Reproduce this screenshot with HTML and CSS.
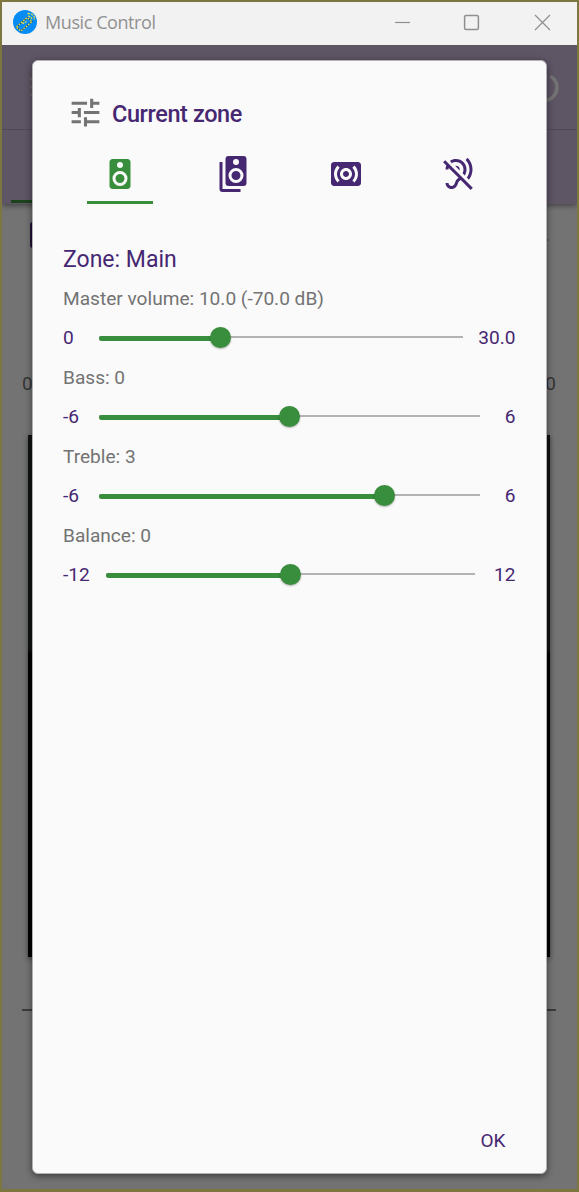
FILE: index.html
```html
<!DOCTYPE html>
<html lang="en">
<head>
<meta charset="utf-8">
<title>Music Control</title>
<link rel="stylesheet" href="styles.css">
</head>
<body>
<div class="window">
  <header class="titlebar">
    <svg class="app-icon" viewBox="0 0 24 24">
      <circle cx="12" cy="12" r="12" fill="#078cf5"/>
      <g fill="none">
        <path d="M3.500 17 14 7.500l5 4L8 21z" stroke="#1d4a68" stroke-width="1.300"/>
        <path d="M3.500 17 14 7.500l5 4L8 21z" stroke="#e4df45" stroke-width="1.300" stroke-dasharray="1.800 1.200"/>
        <path d="M9 12.500l1.500 1 3-2M14.500 3.500l4 .5 2.500 2 .5 4M15 6l3 1 1 2" stroke="#e4df45" stroke-width="1.300" stroke-dasharray="2.500 1"/>
      </g>
    </svg>
    <span class="app-name">Music Control</span>
    <svg class="caption" viewBox="0 0 160 20">
      <g fill="none" stroke="#8f8f8f" stroke-width="1.2">
        <path d="M1 10.500H16"/>
        <rect x="70.600" y="3.600" width="13.800" height="13.800" rx="1.500" stroke-width="1.500"/>
        <path d="M141 3l15 15M156 3l-15 15"/>
      </g>
    </svg>
  </header>
  <div class="app">
    <div class="appbar">
      <div class="toolbar">
        <svg class="menu-dots" viewBox="0 0 4 20"><path d="M0 2h4M0 10h4M0 18h4" stroke="#6b6a6c" stroke-width="2.500"/></svg>
        <svg class="power" viewBox="0 0 32 32"><path d="M22.500 5.200A13 13 0 1 1 9.500 5.200" fill="none" stroke="#737373" stroke-width="3.500"/></svg>
      </div>
      <div class="main-tabs"><div class="main-tab"></div></div>
    </div>
    <div class="player">
      <div class="source"><span class="chip"></span><span class="dot">.</span></div>
      <div class="times"><span>0</span><span>0</span></div>
      <div class="cover"></div>
      <div class="rule"></div>
    </div>
    <section class="dialog">
      <h1 class="heading">
        <svg class="tune" viewBox="0 0 24 24"><path fill="currentColor" d="M3 17v2h6v-2H3zM3 5v2h10V5H3zm10 16v-2h8v-2h-8v-2h-2v6h2zM7 9v2H3v2h4v2h2V9H7zm14 4v-2H11v2h10zm-6-4h2V7h4V5h-4V3h-2v6z"/></svg>
        Current zone
      </h1>
      <nav class="tabs">
        <div class="tab active"><svg viewBox="0 0 24 24"><path fill="currentColor" d="M17 2H7c-1.100 0-2 .9-2 2v16c0 1.100.9 2 2 2h10c1.100 0 2-.9 2-2V4c0-1.100-.9-2-2-2zm-5 2a2 2 0 1 1 0 4 2 2 0 0 1 0-4zm0 16a5 5 0 1 1 0-10 5 5 0 0 1 0 10zm0-8a3 3 0 1 0 0 6 3 3 0 0 0 0-6z"/></svg></div>
        <div class="tab"><svg viewBox="0 0 24 24"><path fill="currentColor" d="M14 10a3 3 0 1 0 0 6 3 3 0 0 0 0-6m0 8a5 5 0 1 1 0-10 5 5 0 0 1 0 10m0-16a2 2 0 1 1 0 4 2 2 0 0 1 0-4m5-2H9a2 2 0 0 0-2 2v16a2 2 0 0 0 2 2h10a2 2 0 0 0 2-2V2a2 2 0 0 0-2-2M5 4H3v18a2 2 0 0 0 2 2h12v-2H5z"/></svg></div>
        <div class="tab"><svg viewBox="0 0 24 24"><path fill="currentColor" d="M20 4H4c-1.100 0-2 .9-2 2v12c0 1.100.9 2 2 2h16c1.100 0 2-.9 2-2V6c0-1.100-.9-2-2-2zM7.760 16.240l-1.410 1.410C4.780 16.100 4 14.050 4 12c0-2.050.78-4.100 2.340-5.660l1.410 1.410C6.590 8.930 6 10.460 6 12s.59 3.070 1.760 4.240zM12 16c-2.210 0-4-1.790-4-4s1.790-4 4-4 4 1.790 4 4-1.790 4-4 4zm5.660 1.660l-1.410-1.410C17.410 15.070 18 13.540 18 12s-.59-3.070-1.760-4.240l1.410-1.410C19.220 7.900 20 9.950 20 12c0 2.050-.78 4.100-2.340 5.660zM12 10c-1.100 0-2 .9-2 2s.9 2 2 2 2-.9 2-2-.9-2-2-2z"/></svg></div>
        <div class="tab"><svg viewBox="0 0 24 24"><path fill="currentColor" d="M6.030 3.200C7.150 2.440 8.510 2 10 2c3.930 0 7 3.070 7 7 0 1.260-.38 2.650-1.070 3.900l-.08.13-1.480-1.480c.4-.83.63-1.720.63-2.550 0-2.800-2.200-5-5-5-1.080 0-2.080.34-2.880.88L6.030 3.200zm11.180 11.180 1.430 1.430C20.110 13.930 21 11.570 21 9c0-3.040-1.230-5.790-3.220-7.780l-1.420 1.420C17.990 4.260 19 6.510 19 9c0 2.020-.67 3.880-1.790 5.380zM10 6.500c-.21 0-.4.03-.59.08l3.010 3.010c.05-.19.08-.38.08-.59 0-1.380-1.120-2.500-2.500-2.500zM21.190 21.190 2.810 2.810 1.390 4.220l2.130 2.130C3.190 7.160 3 8.050 3 9h2c0-.36.05-.71.12-1.050l6.610 6.610c-.88.68-1.780 1.410-2.270 2.900-.5 1.500-1 2.010-1.710 2.380-.19.1-.47.16-.75.16-1.100 0-2-.9-2-2H3c0 2.210 1.790 4 4 4 .57 0 1.130-.12 1.640-.35 1.360-.71 2.130-1.730 2.730-3.550.32-.98.9-1.430 1.710-2.050l.08-.06 6.610 6.610 1.420-1.460z"/></svg></div>
      </nav>
      <h2 class="zone">Zone: Main</h2>
      <div class="setting">
        <div class="label">Master volume: 10.0 (-70.0 dB)</div>
        <div class="slider"><span class="min">0</span><div class="track"><div class="fill" style="width:33.3%"><i class="thumb"></i></div></div><span class="max">30.0</span></div>
      </div>
      <div class="setting">
        <div class="label">Bass: 0</div>
        <div class="slider"><span class="min">-6</span><div class="track"><div class="fill" style="width:50%"><i class="thumb"></i></div></div><span class="max">6</span></div>
      </div>
      <div class="setting">
        <div class="label">Treble: 3</div>
        <div class="slider"><span class="min">-6</span><div class="track"><div class="fill" style="width:75%"><i class="thumb"></i></div></div><span class="max">6</span></div>
      </div>
      <div class="setting">
        <div class="label">Balance: 0</div>
        <div class="slider"><span class="min">-12</span><div class="track"><div class="fill" style="width:50%"><i class="thumb"></i></div></div><span class="max wide">12</span></div>
      </div>
      <footer class="actions"><button class="ok">OK</button></footer>
    </section>
  </div>
</div>
</body>
</html>
```
FILE: styles.css
```css
* { box-sizing: border-box; }
body { margin: 0; font-family: Roboto, sans-serif; color: #462772; }
.window { width: 579px; height: 1192px; border: 2px solid #7d763e; border-bottom-width: 3px; display: flex; flex-direction: column; }
.titlebar { height: 43px; flex: none; background: #f2f2f2; display: flex; align-items: center; padding: 0 23px 3px 11px; }
.app-icon { width: 24px; height: 24px; }
.app-name { font: 18px/24px "Open Sans", sans-serif; color: #919191; margin-left: 8px; flex: 1; white-space: nowrap; letter-spacing: -.42px; }
.caption { width: 160px; height: 20px; }
.app { position: relative; flex: 1; background: #737373; overflow: hidden; }
.appbar { height: 159px; background: #5e5565; box-shadow: 0 2px 5px rgba(0,0,0,.4); }
.toolbar { height: 85px; border-bottom: 1px solid #50475a; display: flex; justify-content: space-between; align-items: center; padding: 0 17px 0 28px; }
.menu-dots { width: 4px; height: 20px; }
.power { width: 32px; height: 32px; }
.main-tabs { height: 74px; display: flex; align-items: flex-end; padding: 0 0 1px 9px; }
.main-tab { width: 120px; height: 3px; background: #1a431c; }
.player { padding: 18px 21px 0 20px; }
.source { height: 26px; display: flex; justify-content: space-between; padding: 0 7px 0 8px; }
.chip { width: 26px; height: 26px; border-radius: 3px; background: #211238; }
.dot { font-size: 18px; line-height: 26px; color: #211238; }
.times { display: flex; justify-content: space-between; margin-top: 124px; height: 24px; font-size: 19px; line-height: 24px; color: #353535; }
.cover { height: 522px; margin: 39px 6px 0 6px; background: linear-gradient(#101312 0 41%, #000 42%); box-shadow: 0 2px 5px rgba(0,0,0,.4); }
.rule { margin-top: 52px; border-top: 2px solid #3b3b3b; }
.dialog { position: absolute; left: 30px; top: 15px; width: 515px; height: 1114px; background: #fafafa; border: 1px solid #b3b1b5; border-radius: 6px; box-shadow: 0 2px 7px rgba(0,0,0,.5); padding: 28px 30.500px 14px 30px; display: flex; flex-direction: column; }
.heading { margin: 0; height: 50px; display: flex; align-items: center; gap: 8px; padding-left: 4px; font-size: 23.500px; font-weight: 500; letter-spacing: -.4px; }
.tune { width: 37px; height: 37px; color: #737373; margin-top: -3px; }
.tabs { display: grid; grid-template-columns: repeat(4, 1fr); height: 65px; padding-top: 16px; }
.tab { display: flex; justify-content: center; height: 49px; margin: 0 23.500px; padding-top: 1px; border-bottom: 3px solid transparent; }
.tab svg { width: 36px; height: 36px; }
.active { color: #388e3c; border-color: #388e3c; }
.zone { margin: 42px 0 0; height: 28px; font-size: 23px; line-height: 28px; font-weight: 400; }
.setting { height: 79px; padding-top: 13px; }
.label { height: 24px; font-size: 19.100px; line-height: 24px; color: #737373; white-space: nowrap; }
.slider { display: flex; align-items: center; gap: 16px; height: 30px; margin-top: 11px; font-size: 19.100px; line-height: 24px; }
.min, .max { min-width: 20px; margin-top: 1px; }
.max { text-align: right; margin-left: -.5px; }
.wide { min-width: 25px; }
.track { flex: 1; height: 2px; background: #b3b3b3; }
.fill { height: 5px; border-radius: 3px; background: #388e3c; position: relative; }
.thumb { position: absolute; right: -10.500px; top: -9px; width: 21px; height: 21px; border-radius: 50%; background: #388e3c; box-shadow: 0 1px 2px rgba(0,0,0,.3); }
.actions { margin-top: auto; display: flex; justify-content: flex-end; }
.ok { background: none; border: 0; padding: 6px 10px; font: 19px/24px Roboto, sans-serif; color: #462772; }
```
